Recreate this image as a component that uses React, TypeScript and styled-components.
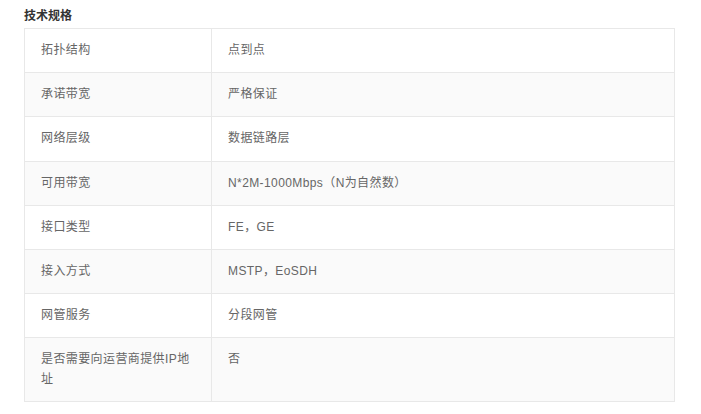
import styled, { createGlobalStyle } from "styled-components"

const GlobalStyle = createGlobalStyle`
    body{
        margin: 0;
        background: #fff;
        font-family: "Liberation Sans", "Noto Sans CJK SC", sans-serif;
    }
`

const specs: [string, string][] = [
    ["拓扑结构", "点到点"],
    ["承诺带宽", "严格保证"],
    ["网络层级", "数据链路层"],
    ["可用带宽", "N*2M-1000Mbps（N为自然数）"],
    ["接口类型", "FE，GE"],
    ["接入方式", "MSTP，EoSDH"],
    ["网管服务", "分段网管"],
    ["是否需要向运营商提供IP地址", "否"],
]

function App() {
    return (
        <>
            <GlobalStyle />
            <StyledSpecs>
                <h3 className="title">技术规格</h3>
                <table className="table">
                    <tbody>
                        {specs.map(([label, value], i) => (
                            <Row key={label} $striped={i % 2 === 1}>
                                <td className="label">{label}</td>
                                <td className="value">{value}</td>
                            </Row>
                        ))}
                    </tbody>
                </table>
            </StyledSpecs>
        </>
    )
}

const Row = styled.tr<{ $striped: boolean }>`
    background-color: ${({ $striped }) => ($striped ? "#fafafa" : "#fff")};
`

const StyledSpecs = styled.div`

    padding: 8px 26px 0 24px;

    .title{
        margin: 0 0 4px;
        font-size: 12px;
        line-height: 16px;
        font-weight: bold;
        color: #333;
    }

    .table{
        width: 100%;
        border-collapse: collapse;
        font-size: 12px;
        letter-spacing: .4px;
        color: #666;
    }

    td{
        border: 1px solid #e8e8e8;
        padding: 12px 16px;
        line-height: 19.2px;
        vertical-align: top;
        text-align: left;
    }

    .label{
        width: 154px;
    }

`

export default App
